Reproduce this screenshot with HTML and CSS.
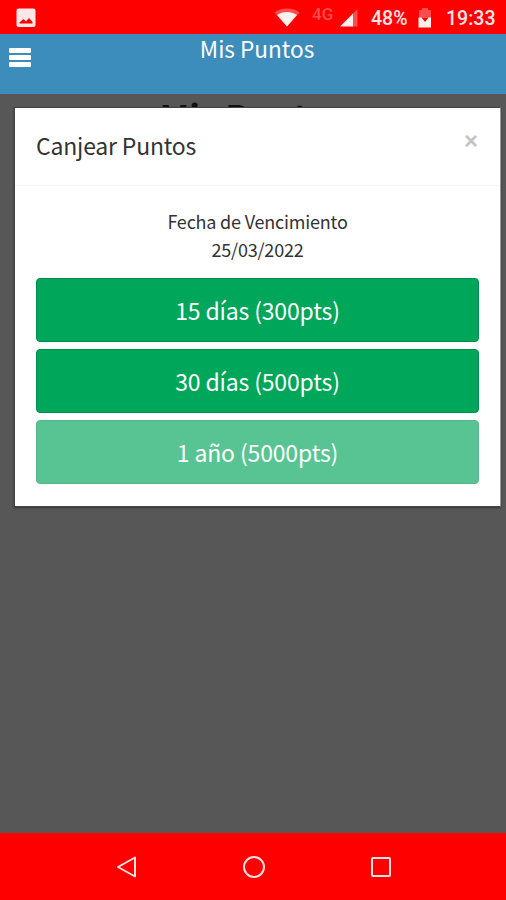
FILE: index.html
```html
<!DOCTYPE html>
<html lang="es">
<head>
    <meta charset="UTF-8">
    <meta name="viewport" content="width=device-width, initial-scale=1.0">
    <title>Mis Puntos</title>
    <link rel="stylesheet" href="styles.css">
</head>
<body>
    <!-- Barra de estado -->
    <div class="status-bar">
        <svg class="icon-image" width="20" height="20" viewBox="0 0 20 20">
            <path fill="#ffe6e6" fill-rule="evenodd" d="M2.5 0.5h15a2 2 0 0 1 2 2v14.500a2 2 0 0 1-2 2h-15a2 2 0 0 1-2-2v-14.500a2 2 0 0 1 2-2zM3.500 15.500h13v-1.500l-3.500-4-3 3.500-2.500-2.500-4 3.500z"/>
        </svg>
        <svg class="icon-wifi" width="26" height="20" viewBox="0 0 26 20">
            <path fill="#ff4d4d" d="M0.500 4.500C7 -1 19 -1 25.500 4.500L13 18.500z"/>
            <path fill="#fff0f0" d="M3 7C9 3 17 3 23 7L13 18.500z"/>
        </svg>
        <span class="network">4G</span>
        <svg class="icon-signal" width="18" height="18" viewBox="0 0 18 18">
            <path fill="#ff4d4d" d="M17.500 0v17.500h-5V5z"/>
            <path fill="#fff0f0" d="M0 17.500L13 4.500v13z"/>
        </svg>
        <span class="battery">48%</span>
        <svg class="icon-battery" width="14" height="20" viewBox="0 0 14 20">
            <path fill="#ff4d4d" d="M4 0h6v2h3v8H1V2h3z"/>
            <path fill="#fff0f0" d="M0.500 9.500h3l3.500 4.500 3.500-4.500h2.500V19.500H0.500z"/>
        </svg>
        <span class="clock">19:33</span>
    </div>

    <header class="navbar">
        <button class="menu-toggle" type="button" aria-label="Menú">
            <span></span>
            <span></span>
            <span></span>
        </button>
        <div class="navbar-title">Mis Puntos</div>
    </header>

    <main class="content">
        <h1 class="page-title">Mis Puntos</h1>

        <!-- Ventana de canje -->
        <div class="modal">
            <div class="modal-header">
                <h4>Canjear Puntos</h4>
                <button class="close" type="button" aria-label="Cerrar">&times;</button>
            </div>
            <div class="modal-body">
                <p>Fecha de Vencimiento</p>
                <p class="date">25/03/2022</p>
                <button class="btn" type="button">15 días (300pts)</button>
                <button class="btn" type="button">30 días (500pts)</button>
                <button class="btn" type="button" disabled>1 año (5000pts)</button>
            </div>
        </div>
    </main>

    <!-- Botones del sistema -->
    <nav class="system-nav">
        <svg width="24" height="24" viewBox="0 0 24 24"><path d="M20 2.500v19L3 12z"/></svg>
        <svg width="24" height="24" viewBox="0 0 24 24"><circle cx="12" cy="12" r="10"/></svg>
        <svg width="24" height="24" viewBox="0 0 24 24"><rect x="3" y="3" width="18" height="18" rx="1"/></svg>
    </nav>
</body>
</html>
```
FILE: styles.css
```css
* {
    box-sizing: border-box;
}
body {
    display: flex;
    flex-direction: column;
    height: 900px;
    margin: 0;
    font-family: "Noto Sans CJK JP", sans-serif;
    background-color: #575757;
    color: #333;
    overflow: hidden;
}
h1, h4, p {
    margin: 0;
    font-weight: normal;
}
button {
    padding: 0;
    border: none;
    background: none;
    font-family: inherit;
}
.status-bar {
    display: flex;
    flex: none;
    height: 34px;
    padding: 8px 11px 0 16px;
    background-color: #ff0000;
    color: #ffe6e6;
    font-family: Roboto, sans-serif;
    font-size: 19.5px;
    font-weight: 500;
    line-height: 21px;
}
.icon-wifi {
    margin-left: auto;
}
.network {
    width: 22px;
    margin-left: 12px;
    color: #ff4d4d;
    font-size: 17px;
    line-height: 12px;
}
.icon-signal {
    margin: 1px 0 0 6px;
}
.battery {
    width: 37px;
    margin-left: 13px;
}
.icon-battery {
    margin-left: 10px;
}
.clock {
    width: 49px;
    margin-left: 14px;
}
.navbar {
    position: relative;
    flex: none;
    height: 60px;
    background-color: #3c8dbc;
    color: #fff;
}
.navbar-title {
    padding-left: 8px;
    font-size: 22.6px;
    line-height: 30px;
    text-align: center;
}
.menu-toggle {
    position: absolute;
    top: 14px;
    left: 9px;
    width: 22px;
}
.menu-toggle span {
    display: block;
    height: 5px;
    margin-bottom: 2px;
    border-radius: 1px;
    background-color: #fff;
}
.content {
    position: relative;
    flex: 1;
    overflow: hidden;
}
.page-title {
    color: #111;
    font-size: 35px;
    font-weight: bold;
    line-height: 43px;
    text-align: center;
}
.modal {
    position: absolute;
    top: 13px;
    left: 14px;
    width: 487px;
    height: 400px;
    border: 1px solid #444;
    border-right-color: #999;
    background-color: #fff;
    box-shadow: 0 1px 2px rgba(0, 0, 0, 0.4);
}
.modal-header {
    display: flex;
    justify-content: space-between;
    height: 78px;
    padding: 20px 22px 0 21px;
    border-bottom: 1px solid #f4f4f4;
}
.modal-header h4 {
    font-size: 23px;
    line-height: 35px;
    letter-spacing: -0.2px;
}
.close {
    height: 24px;
    margin-top: 1px;
    color: #c4c4c4;
    font-family: "Liberation Sans", sans-serif;
    font-size: 24px;
    font-weight: bold;
    line-height: 24px;
}
.modal-body {
    padding: 21px 21px 0;
    text-align: center;
}
.modal-body p {
    font-size: 18px;
    line-height: 28px;
    letter-spacing: -0.2px;
}
.modal-body .date {
    margin-bottom: 15px;
}
.btn {
    display: block;
    width: 443px;
    height: 64px;
    margin-bottom: 7px;
    padding-bottom: 1px;
    border: 1px solid #008d4c;
    border-radius: 4px;
    background-color: #00a65a;
    color: #fff;
    font-size: 23px;
    line-height: 34px;
    letter-spacing: -0.15px;
}
.btn:disabled {
    opacity: 0.65;
}
.system-nav {
    display: flex;
    flex: none;
    justify-content: center;
    gap: 103px;
    height: 67px;
    padding-top: 22px;
    background-color: #ff0000;
}
.system-nav svg {
    position: relative;
    left: 0.5px;
    fill: none;
    stroke: #ffe0e0;
    stroke-width: 2;
    stroke-linejoin: round;
}
```
